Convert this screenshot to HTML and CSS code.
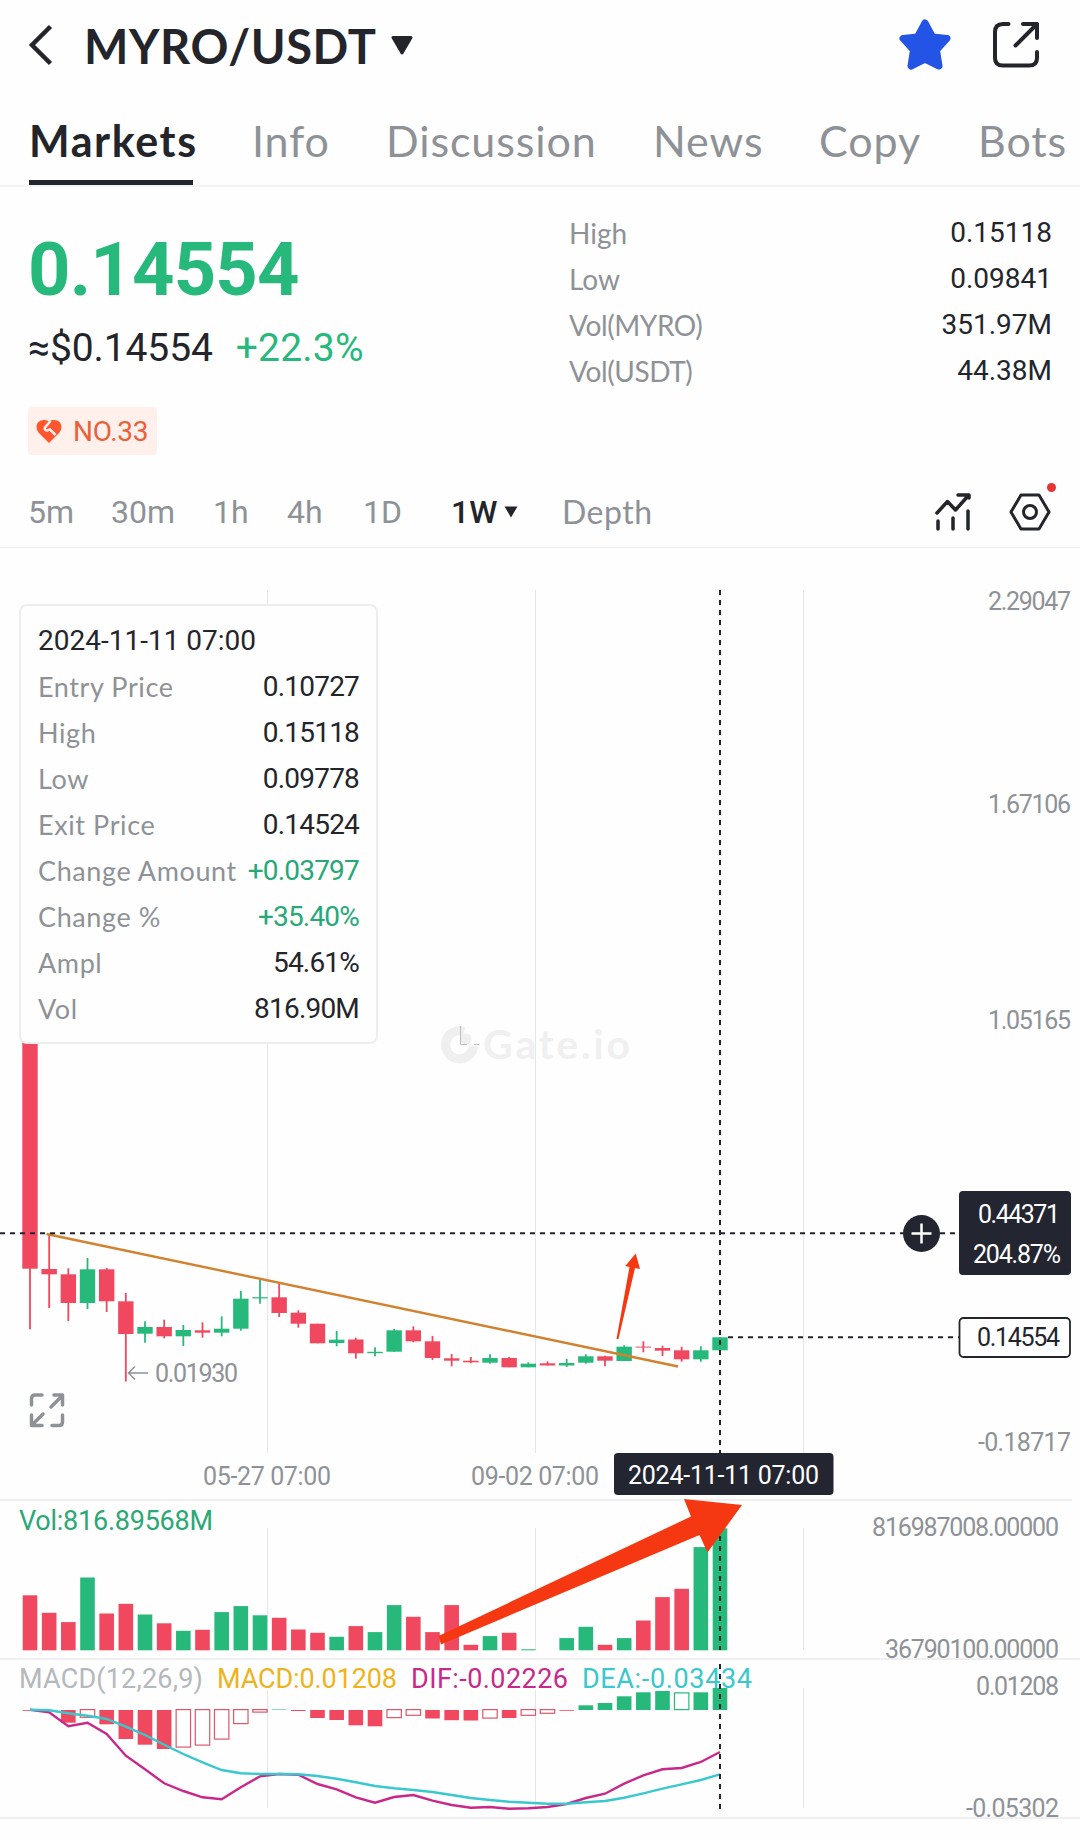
FILE: index.html
```html
<!DOCTYPE html>
<html lang="en">
  <head>
    <meta charset="UTF-8" />
    <meta name="viewport" content="width=device-width, initial-scale=1.0" />
    <title>MYRO/USDT</title>
    <link rel="stylesheet" href="styles.css">
  </head>

  <body>
    <header class="header">
      <svg class="back" viewBox="0 0 26 42">
        <path d="M23.500 2.500L5 21L23.500 39.500" />
      </svg>
      <h1 class="pair">MYRO/USDT</h1>
      <svg class="caret" viewBox="0 0 22 19">
        <path d="M2 1.500H20L11 17Z" />
      </svg>
      <svg class="star" viewBox="0 0 52 51">
        <path d="M26 4L33.500 18L48 19.500L37.500 31L40 47L26 40L12 47L14.500 31L4 19.500L18.500 18Z" />
      </svg>
      <svg class="share" viewBox="0 0 46 46">
        <path d="M15.500 2H10Q2 2 2 10V36Q2 43.500 10 43.500H36Q44 43.500 44 36V30M30 2H44V16M44 2L22.500 23.500" />
      </svg>
    </header>

    <nav class="tabs">
      <a class="tab active" href="#">Markets</a>
      <a class="tab" href="#">Info</a>
      <a class="tab" href="#">Discussion</a>
      <a class="tab" href="#">News</a>
      <a class="tab" href="#">Copy</a>
      <a class="tab" href="#">Bots</a>
    </nav>

    <section class="summary">
      <div class="quote">
        <div class="price">0.14554</div>
        <div class="fiat">
          <span class="fiat-value">≈$0.14554</span>
          <span class="fiat-change">+22.3%</span>
        </div>
        <div class="rank">
          <svg class="heart" viewBox="0 0 26 24">
            <path class="heart-shape" d="M13 24L2.500 13.500C-3 6 4-2.500 13 2.500C22-2.500 29 6 23.500 13.500Z" />
            <path class="heart-crack" d="M14.500 2L9 8.500Q8 11 11 11.500L14 10.500L19.500 16" />
          </svg>
          <span>NO.33</span>
        </div>
      </div>
      <dl class="stats">
        <div class="stat"><dt>High</dt><dd>0.15118</dd></div>
        <div class="stat"><dt>Low</dt><dd>0.09841</dd></div>
        <div class="stat"><dt class="tight">Vol(MYRO)</dt><dd>351.97M</dd></div>
        <div class="stat"><dt class="tight">Vol(USDT)</dt><dd>44.38M</dd></div>
      </dl>
    </section>

    <div class="intervals">
      <span>5m</span>
      <span>30m</span>
      <span>1h</span>
      <span>4h</span>
      <span>1D</span>
      <span class="selected">1W
        <svg class="caret-small" viewBox="0 0 14 12"><path d="M0.500 0.500H13.500L7 11.500Z" /></svg>
      </span>
      <span class="depth">Depth</span>
      <svg class="indicator" viewBox="0 0 36 38">
        <path d="M2 20L12.500 8.500L20.500 17L33 3M23 2H34V5M3 28V36M18 25V36M33 18V36" />
      </svg>
      <div class="settings">
        <svg viewBox="0 0 42 38">
          <path d="M12 2H30L40 19L30 36H12L2 19Z" />
          <circle cx="21" cy="19" r="6.500" />
        </svg>
        <i class="dot"></i>
      </div>
    </div>

    <main class="chart">
      <!-- price pane -->
      <svg class="pane" viewBox="0 548 1080 951" height="951">
        <path class="grid" d="M267.500 590V1453M535.500 590V1453M803.500 590V1453" />
        <g class="watermark">
          <path d="M464 1031.500A14 14 0 1 0 473.500 1046" />
          <circle cx="466" cy="1039" r="5.500" />
          <text x="483" y="1059" textLength="147">Gate.io</text>
        </g>
        <path class="watermark-edge" d="M460.500 1026V1044.500H467M474 1044.500H479" />
        <g id="candles"></g>
        <path class="low-arrow" d="M148 1373H129M135 1366.500L128.500 1373L135 1379.500" />
        <text class="axis" x="155" y="1382" textLength="83">0.01930</text>
        <path class="expand" d="M42 1395H35Q31.500 1395 31.500 1399V1405M51 1407L62 1396M54 1395H62.500V1405M31.500 1415V1425.500H42M32 1425L43 1414M62.500 1415V1422Q62.500 1425.500 59 1425.500H52" />
        <g class="axis">
          <text x="988" y="610" textLength="83">2.29047</text>
          <text x="988" y="813" textLength="83">1.67106</text>
          <text x="988" y="1029" textLength="83">1.05165</text>
          <text x="978" y="1451" textLength="93">-0.18717</text>
          <text x="203" y="1484.500" textLength="128">05-27 07:00</text>
          <text x="471" y="1484.500" textLength="128">09-02 07:00</text>
        </g>
        <path class="trend" d="M46.500 1234L678 1366.500" />
        <path class="cross" d="M0 1233.300H959" />
        <path class="cross" d="M720 590V1453" />
        <path class="cross" d="M728 1337.300H959" />
        <circle class="tag" cx="921.500" cy="1233.500" r="18.500" />
        <path class="plus" d="M911.500 1233.500H931.500M921.500 1223.500V1243.500" />
        <rect class="tag" x="959" y="1191" width="112" height="84" rx="4" />
        <text class="tag-text" x="978" y="1223" textLength="82">0.44371</text>
        <text class="tag-text" x="973" y="1263" textLength="88">204.87%</text>
        <rect class="last" x="959.500" y="1318" width="110.500" height="39" rx="4" />
        <text class="last-text" x="977" y="1346" textLength="83">0.14554</text>
        <rect class="tag" x="614" y="1453" width="219.500" height="42" rx="4" />
        <text class="tag-text" x="628" y="1484" textLength="191">2024-11-11 07:00</text>
      </svg>

      <!-- volume pane -->
      <svg class="pane" viewBox="0 1499 1080 159" height="159">
        <path class="divider" d="M0 1500H1072" />
        <path class="grid" d="M267.500 1528V1650M535.500 1528V1650M803.500 1528V1650" />
        <text class="vol-label" x="19" y="1529.500" textLength="194">Vol:816.89568M</text>
        <g id="volume"></g>
        <path class="cross" d="M720 1526V1650" />
        <g class="axis">
          <text x="872" y="1536" textLength="187">816987008.00000</text>
          <text x="885" y="1657.500" textLength="174">36790100.00000</text>
        </g>
      </svg>

      <!-- MACD pane -->
      <svg class="pane" viewBox="0 1658 1080 181" height="181">
        <path class="divider" d="M0 1659H1080M0 1818H1080" />
        <path class="grid" d="M267.500 1690V1808M535.500 1690V1808M803.500 1688V1808" />
        <g id="macd"></g>
        <polyline id="dif" class="dif" />
        <polyline id="dea" class="dea" />
        <path class="cross" d="M720 1664V1810" />
        <g class="legend">
          <text class="legend-name" x="19" y="1688" textLength="184">MACD(12,26,9)</text>
          <text class="legend-macd" x="217" y="1688" textLength="180">MACD:0.01208</text>
          <text class="legend-dif" x="411" y="1688" textLength="157">DIF:-0.02226</text>
          <text class="legend-dea" x="582" y="1688" textLength="170">DEA:-0.03434</text>
        </g>
        <g class="axis">
          <text x="976" y="1695" textLength="83">0.01208</text>
          <text x="966" y="1816.500" textLength="93">-0.05302</text>
        </g>
      </svg>

      <!-- drawn arrows run over all panes -->
      <svg class="marks" viewBox="0 548 1080 1291">
        <path d="M616.500 1339L629.500 1267L625.300 1266L635.700 1253.500L640 1269L635 1268L618.500 1339Z" />
        <path d="M438.500 1636L691 1516.500L684 1499L742 1505L707.500 1552.500L699.500 1535L441 1644.500Z" />
      </svg>

      <div class="info">
        <div class="info-date">2024-11-11 07:00</div>
        <div class="info-row"><span>Entry Price</span><b>0.10727</b></div>
        <div class="info-row"><span>High</span><b>0.15118</b></div>
        <div class="info-row"><span>Low</span><b>0.09778</b></div>
        <div class="info-row"><span>Exit Price</span><b>0.14524</b></div>
        <div class="info-row"><span>Change Amount</span><b class="up">+0.03797</b></div>
        <div class="info-row"><span>Change %</span><b class="up">+35.40%</b></div>
        <div class="info-row"><span>Ampl</span><b>54.61%</b></div>
        <div class="info-row"><span>Vol</span><b>816.90M</b></div>
      </div>
    </main>

    <script>
      const NS = "http://www.w3.org/2000/svg";
      const STEP = 690 / 36;
      const centerX = (i) => 30 + i * STEP;

      // color, wick top, body top, body bottom, wick bottom
      const candles = [
        ["r", 1000, 1000, 1268.7, 1329.3],
        ["r", 1234.3, 1269, 1274.3, 1308],
        ["r", 1268.3, 1274.3, 1303, 1321],
        ["g", 1258, 1269.3, 1303, 1309],
        ["r", 1268, 1269.3, 1301.3, 1312],
        ["r", 1293, 1301.3, 1334, 1381.5],
        ["g", 1321.3, 1327, 1333.7, 1342.7],
        ["r", 1319.7, 1327, 1336.3, 1338.3],
        ["g", 1325, 1330, 1336.3, 1346],
        ["r", 1322.3, 1330.3, 1332.7, 1337.7],
        ["g", 1316.3, 1328.7, 1332.7, 1336.3],
        ["g", 1291, 1298.7, 1328.7, 1330.7],
        ["g", 1279.7, 1297.2, 1298.4, 1303.7],
        ["r", 1283.7, 1297.3, 1313, 1317],
        ["r", 1310.3, 1312.7, 1323.7, 1327.7],
        ["r", 1323.7, 1323.7, 1343.3, 1343.3],
        ["g", 1331, 1339.7, 1343, 1346.3],
        ["r", 1337.7, 1339.5, 1353.3, 1358.7],
        ["g", 1347.3, 1351.8, 1353.2, 1356.3],
        ["g", 1329, 1330.3, 1351.7, 1351.7],
        ["r", 1326.3, 1330.3, 1341.3, 1342.3],
        ["r", 1336, 1341.3, 1358, 1360],
        ["r", 1354, 1358.3, 1360.7, 1366.3],
        ["r", 1357, 1360.7, 1362.3, 1363.3],
        ["g", 1354.3, 1358, 1362.7, 1363.7],
        ["r", 1357, 1358, 1367.3, 1367.3],
        ["g", 1362.3, 1363.7, 1367.3, 1367.3],
        ["r", 1361.3, 1363.3, 1365.5, 1365.5],
        ["g", 1359, 1363, 1365.5, 1367],
        ["g", 1354.3, 1356.3, 1362.7, 1363.7],
        ["r", 1355.7, 1356.3, 1360.7, 1366.3],
        ["g", 1345.3, 1346.7, 1361, 1361],
        ["r", 1341.3, 1346.6, 1347.6, 1352.3],
        ["r", 1345.7, 1348, 1350.7, 1356],
        ["r", 1346.7, 1350.3, 1359.3, 1361.7],
        ["g", 1346.3, 1350.3, 1359.3, 1361.7],
        ["g", 1337, 1337.3, 1350.3, 1350.3]
      ];

      // bar heights in px above the baseline
      const volume = [
        55, 37.5, 28.2, 72.8, 36.8, 46.5, 35.8, 27, 19.5, 20.5, 38.2, 44.2,
        35, 32.5, 20.8, 17.5, 13.5, 24.2, 18.2, 45.2, 33.5, 18.2, 45.2, 5.5,
        14.2, 17.5, 1, 0, 12.2, 23.5, 5.5, 12.2, 29.8, 53.2, 61.5, 103.2, 122
      ];

      // histogram height, negative hangs below the zero line
      const macd = [
        -0.8, 0, -12.7, -7.7, -14.3, -29, -34.7, -39, -37.5, -35.5, -29.5,
        -14, -2.5, 0.5, -1, -8, -10, -15.3, -16.3, -8, -5.7, -8.5, -10.2,
        -10.5, -8.5, -8, -5.7, -3.7, -0.8, 4.7, 7, 13.7, 17.7, 19, 16.7,
        17.7, 22
      ];
      const hollow = [3, 8, 9, 10, 11, 12, 19, 20, 24, 26, 27, 34];

      // distance below the zero line
      const dif = [
        -0.3, 2.3, 16.3, 12.7, 24, 45.7, 59.3, 73.3, 81, 87.3, 89.3, 77.3,
        66.3, 64, 64.7, 74, 79.3, 87.3, 92.7, 87, 85, 90.7, 95, 97.7, 97,
        98.7, 98.3, 97, 94, 88, 83.7, 73.7, 65.3, 59.3, 58, 52, 42
      ];
      const dea = [
        -0.3, 0.3, 3.3, 5.7, 9, 16.7, 25, 34.7, 44, 52.3, 60, 63.3, 64, 64,
        64.3, 66, 68.7, 72.3, 76, 78.3, 80, 82, 85, 88, 90, 91.7, 92.7,
        93.7, 93.7, 92.3, 91, 87.7, 83.3, 78.7, 74.3, 70, 64.3
      ];

      const addRect = (parent, cls, x, y, width, height) => {
        const rect = document.createElementNS(NS, "rect");
        rect.setAttribute("class", cls);
        rect.setAttribute("x", x);
        rect.setAttribute("y", y);
        rect.setAttribute("width", width);
        rect.setAttribute("height", height);
        parent.appendChild(rect);
      };

      const candleGroup = document.getElementById("candles");
      candles.forEach(([color, high, top, bottom, low], i) => {
        const x = centerX(i);
        addRect(candleGroup, color, x - 0.9, high, 1.8, low - high);
        addRect(candleGroup, color, x - 7.7, top, 15.4, bottom - top);
      });

      const volumeGroup = document.getElementById("volume");
      volume.forEach((h, i) => {
        addRect(volumeGroup, candles[i][0], centerX(i) - 7.3, 1650.3 - h, 14.6, h);
      });

      const ZERO = 1710;
      const macdGroup = document.getElementById("macd");
      macd.forEach((v, i) => {
        const color = v < 0 ? "r" : "g";
        const y = v < 0 ? ZERO : ZERO - v;
        if (hollow.includes(i)) {
          addRect(macdGroup, color + " hollow", centerX(i) - 7.2, y - 0.4, 14.4, Math.abs(v));
        } else {
          addRect(macdGroup, color, centerX(i) - 7.3, y, 14.6, Math.abs(v));
        }
      });

      const toPoints = (list) => list.map((v, i) => `${centerX(i)},${ZERO + v}`).join(" ");
      document.getElementById("dif").setAttribute("points", toPoints(dif));
      document.getElementById("dea").setAttribute("points", toPoints(dea));
    </script>
  </body>
</html>
```
FILE: styles.css
```css
* {
  box-sizing: border-box;
  margin: 0;
  padding: 0;
}

body {
  width: 1080px;
  background-color: #fefefe;
  color: #23252b;
  font-family: Lato, "Noto Sans", sans-serif;
  overflow: hidden;
}

svg {
  display: block;
  flex: none;
  fill: none;
}

.header {
  display: flex;
  align-items: center;
  height: 90px;
  padding: 0 41px 0 27px;
}

.back {
  width: 26px;
  height: 42px;
  stroke: #23252b;
  stroke-width: 4.5;
}

.pair {
  width: 304px;
  margin-left: 31px;
  padding-top: 1px;
  font-size: 47px;
  font-weight: 700;
  letter-spacing: 0.6px;
  white-space: nowrap;
}

.caret {
  width: 22px;
  height: 19px;
  margin-left: 3px;
  fill: #23252b;
  stroke: #23252b;
  stroke-width: 3;
  stroke-linejoin: round;
}

.star {
  width: 52px;
  height: 51px;
  margin-left: auto;
  margin-bottom: 2px;
  fill: #2354e6;
  stroke: #2354e6;
  stroke-width: 7;
  stroke-linejoin: round;
}

.share {
  width: 46px;
  height: 46px;
  margin-left: 42px;
  stroke: #23252b;
  stroke-width: 4;
  stroke-linecap: round;
  stroke-linejoin: round;
}

.tabs {
  display: grid;
  grid-template-columns: 223px 134px 267px 166px 159px 110px;
  justify-items: start;
  height: 97px;
  padding: 26px 0 0 29px;
  border-bottom: 2px solid #f3f3f4;
}

.tab {
  height: 69px;
  color: #8e9297;
  font-size: 43px;
  line-height: 50px;
  letter-spacing: 0.9px;
  text-decoration: none;
  white-space: nowrap;
}

.active {
  width: 164px;
  border-bottom: 5px solid #23252b;
  color: #23252b;
  font-weight: 700;
  letter-spacing: 1.6px;
}

.summary {
  display: flex;
  justify-content: space-between;
  height: 289px;
  padding: 23px 28px 0;
}

.quote {
  padding-top: 23px;
}

.price {
  color: #27b97b;
  font-family: Roboto, sans-serif;
  font-size: 74px;
  font-weight: 700;
  line-height: 74px;
  letter-spacing: -0.8px;
}

.fiat {
  display: flex;
  gap: 23px;
  margin-top: 18px;
  font-family: Roboto, sans-serif;
  font-size: 39px;
  line-height: 46px;
  letter-spacing: -0.1px;
}

.fiat-change {
  color: #27b97b;
  letter-spacing: 0.2px;
}

.rank {
  display: flex;
  align-items: center;
  gap: 11px;
  width: 129px;
  height: 48px;
  margin-top: 36px;
  padding-left: 8px;
  border-radius: 4px;
  background-color: #fff0eb;
  color: #e9613c;
  font-family: Roboto, sans-serif;
  font-size: 28px;
  letter-spacing: -0.3px;
}

.heart {
  width: 26px;
  height: 24px;
}

.heart-shape {
  fill: #ff5630;
}

.heart-crack {
  stroke: #fff0eb;
  stroke-width: 2.5;
}

.stats {
  width: 483px;
  font-size: 28px;
  line-height: 46px;
}

.stat {
  display: flex;
  justify-content: space-between;
}

.stat dt {
  color: #8e9297;
}

.stat .tight {
  letter-spacing: -0.4px;
}

.stat dd {
  font-family: Roboto, sans-serif;
  font-size: 28px;
}

.intervals {
  display: grid;
  grid-template-columns: 83px 102px 74px 76px 88px 111px 373px 74px 42px;
  align-items: center;
  height: 72px;
  padding-left: 28px;
  border-bottom: 1px solid #f0f0f1;
  color: #8e9297;
  font-family: Roboto, sans-serif;
  font-size: 32px;
  white-space: nowrap;
}

.selected {
  display: flex;
  align-items: center;
  gap: 7px;
  color: #23252b;
  font-weight: 500;
}

.caret-small {
  width: 14px;
  height: 12px;
  fill: #23252b;
}

.depth {
  font-family: Lato, sans-serif;
  font-size: 32px;
  letter-spacing: 0.5px;
}

.indicator {
  width: 36px;
  height: 38px;
  stroke: #23252b;
  stroke-width: 3.5;
  stroke-linecap: round;
  stroke-linejoin: round;
}

.settings {
  position: relative;
  width: 42px;
  height: 38px;
  stroke: #23252b;
  stroke-width: 3;
  stroke-linejoin: round;
}

.dot {
  position: absolute;
  top: -10px;
  right: -5px;
  width: 9px;
  height: 9px;
  border-radius: 50%;
  background-color: #e53535;
}

.chart {
  position: relative;
}

.pane {
  width: 1080px;
  overflow: visible;
}

.pane text {
  font-family: Roboto, sans-serif;
}

.grid {
  stroke: #e6e6e8;
  stroke-width: 1;
}

.divider {
  stroke: #efeff1;
  stroke-width: 2;
}

.cross {
  stroke: #23252b;
  stroke-width: 2;
  stroke-dasharray: 5 5;
}

.r {
  fill: #f0495f;
}

.g {
  fill: #27b97b;
}

.hollow {
  fill: #fefefe;
  stroke-width: 1.2;
}

.r.hollow {
  stroke: #d9596c;
}

.g.hollow {
  stroke: #27b97b;
}

.axis {
  fill: #8e9297;
  font-size: 25px;
}

.watermark path {
  stroke: #efeff0;
  stroke-width: 9;
}

.watermark circle {
  fill: #efeff0;
}

.pane .watermark text {
  fill: #f0f0f1;
  font-family: Lato, sans-serif;
  font-size: 41px;
  font-weight: 700;
}

.watermark-edge {
  stroke: #bdbdbf;
  stroke-width: 1;
}

.low-arrow {
  stroke: #8e9297;
  stroke-width: 1.5;
}

.expand {
  stroke: #8e9297;
  stroke-width: 3.5;
  stroke-linecap: round;
  stroke-linejoin: round;
}

.trend {
  stroke: #d2812f;
  stroke-width: 2.4;
}

.tag {
  fill: #232631;
}

.plus {
  stroke: #ffffff;
  stroke-width: 2.5;
}

.tag-text {
  fill: #ffffff;
  font-size: 25px;
}

.last {
  fill: #fefefe;
  stroke: #23252b;
  stroke-width: 1.8;
}

.last-text {
  fill: #23252b;
  font-size: 25px;
}

.vol-label {
  fill: #2aa876;
  font-size: 27px;
}

.legend {
  font-size: 27px;
}

.legend-name {
  fill: #b5b8bd;
}

.legend-macd {
  fill: #edb320;
}

.legend-dif {
  fill: #c9288a;
}

.legend-dea {
  fill: #38c8cd;
}

.dif {
  stroke: #c9288a;
  stroke-width: 2.4;
}

.dea {
  stroke: #38c8cd;
  stroke-width: 2.4;
}

.marks {
  position: absolute;
  top: 0;
  left: 0;
  width: 1080px;
  height: 1291px;
  fill: #f53812;
}

.info {
  position: absolute;
  top: 56px;
  left: 19px;
  width: 359px;
  height: 440px;
  padding: 12px 17px 0 17px;
  border: 2px solid #eeeef0;
  border-radius: 8px;
  background-color: #fefefe;
  font-size: 27px;
  line-height: 46px;
}

.info-date {
  font-family: Roboto, sans-serif;
  font-size: 28px;
  white-space: nowrap;
}

.info-row {
  display: flex;
  justify-content: space-between;
  color: #8e9297;
  white-space: nowrap;
}

.info-row span {
  letter-spacing: 0.6px;
}

.info-row b {
  color: #23252b;
  font-family: Roboto, sans-serif;
  font-size: 28px;
  font-weight: 400;
  letter-spacing: -0.8px;
}

.info-row .up {
  color: #27a877;
}
```
